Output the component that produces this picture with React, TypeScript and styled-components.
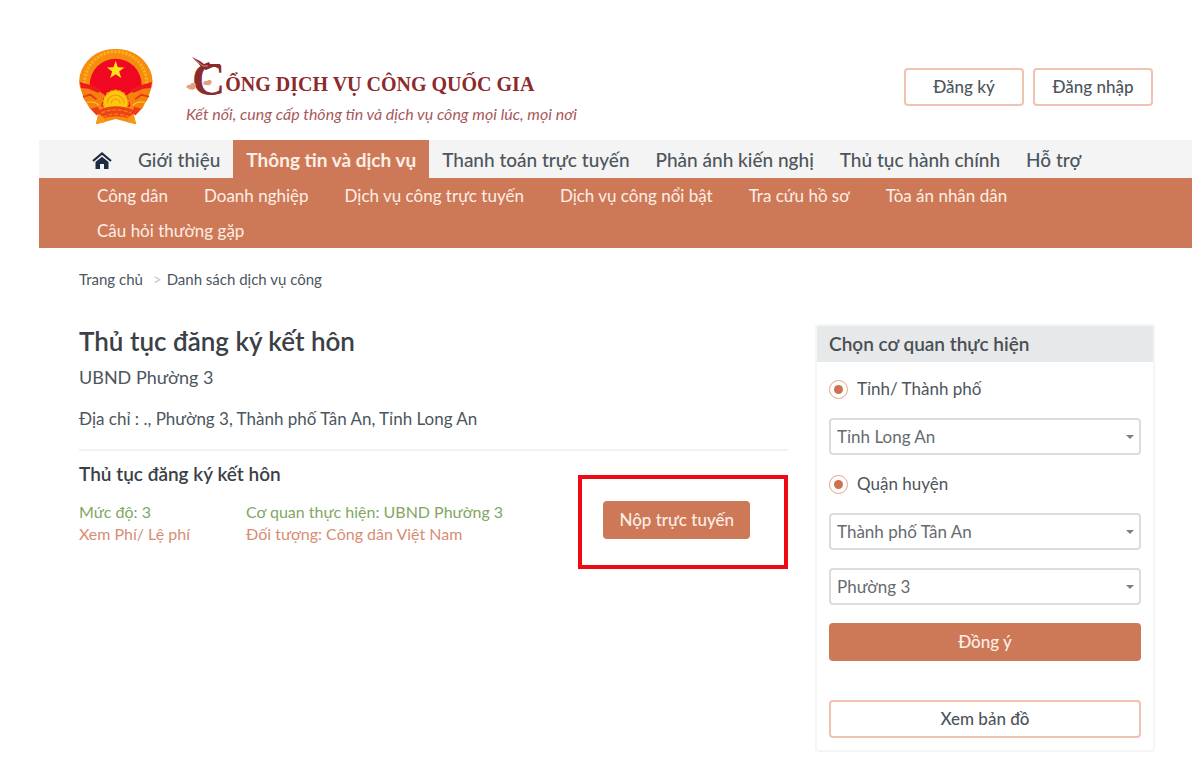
import React from 'react';
import styled, { createGlobalStyle, css } from 'styled-components';

const color = {
  brand: '#cd7957',
  brandSoft: '#efc2b1',
  maroon: '#8c2a2c',
  text: '#4d555d',
  dark: '#3b4046',
  green: '#83a663',
  line: '#f2f2f2',
};

const GlobalStyle = createGlobalStyle`
  *, *::before, *::after { box-sizing: border-box; }
  body {
    margin: 0;
    background: #fff;
    color: ${color.text};
    font-family: Lato, "Noto Sans", sans-serif;
    font-size: 16px;
    line-height: 22px;
  }
  a { color: inherit; text-decoration: none; }
  h1, h2, h3, p, ul, ol { margin: 0; padding: 0; }
  ul, ol { list-style: none; }
  button, select, input { font: inherit; color: inherit; margin: 0; }
`;

const Page = styled.div`
  padding-left: 39px;
`;

const Header = styled.header`
  display: flex;
  align-items: center;
  min-height: 140px;
  padding: 49px 39px 15px 40px;
`;

const Brand = styled.a`
  display: flex;
  align-items: center;
  gap: 33px;
  flex: 1;
`;

const BrandText = styled.span`
  display: flex;
  flex-direction: column;
  color: ${color.maroon};
`;

const BrandName = styled.span`
  display: flex;
  align-items: flex-end;
  height: 46px;
  font-family: "Liberation Serif", serif;
  font-weight: 700;
  font-size: 20px;
  line-height: 26px;
  white-space: nowrap;
`;

const Initial = styled.span`
  position: relative;
  padding-left: 6px;
  font-size: 46px;
  line-height: 34px;
`;

const Ornament = styled.svg`
  position: absolute;
  left: 0;
  top: -7px;
`;

const Slogan = styled.span`
  padding-top: 7px;
  color: #a8595b;
  font-size: 16px;
  line-height: 20px;
  font-style: italic;
  white-space: nowrap;
`;

const Actions = styled.div`
  display: flex;
  gap: 9px;
`;

const Button = styled.button<{ $solid?: boolean; $wide?: boolean }>`
  height: 38px;
  width: ${p => (p.$wide ? '100%' : 'auto')};
  min-width: 120px;
  padding: 0 14px;
  border: 2px solid ${color.brandSoft};
  border-radius: 4px;
  background: #fff;
  color: ${color.text};
  font-size: 17px;
  font-weight: 500;
  cursor: pointer;
  ${p => p.$solid && css`
    border-color: ${color.brand};
    background: ${color.brand};
    color: #fdeee6;
  `}
`;

const MainNav = styled.nav`
  background: #f4f4f4;
  padding-left: 40px;
`;

const MainList = styled.ul`
  display: flex;
`;

const MainLink = styled.a<{ $active?: boolean }>`
  display: flex;
  align-items: center;
  height: 38px;
  padding: 2px 13px 0;
  font-size: 19px;
  font-weight: ${p => (p.$active ? 700 : 500)};
  white-space: nowrap;
  background: ${p => (p.$active ? color.brand : 'transparent')};
  color: ${p => (p.$active ? '#fdeee6' : color.text)};
`;

const SubNav = styled.nav`
  background: ${color.brand};
  padding: 0 39px 0 40px;
`;

const SubList = styled.ul`
  display: flex;
  flex-wrap: wrap;
`;

const SubLink = styled.a`
  display: block;
  padding: 0 18px;
  color: #fdeee6;
  font-size: 17px;
  line-height: 35px;
  white-space: nowrap;
`;

const Breadcrumb = styled.nav`
  padding: 20px 40px 0;
  font-size: 15px;
  line-height: 22px;
`;

const Crumbs = styled.ol`
  display: flex;
  gap: 10px;
  li + li::before {
    content: '>';
    margin-right: 5px;
    color: #c4c7ca;
  }
`;

const Content = styled.div`
  display: grid;
  grid-template-columns: minmax(0, 1fr) 340px;
  gap: 27px;
  align-items: start;
  padding: 34px 37px 31px 40px;
`;

const Title = styled.h1`
  color: ${color.dark};
  font-size: 26px;
  font-weight: 600;
  line-height: 34px;
`;

const Office = styled.p`
  padding-top: 7px;
  font-size: 18px;
  line-height: 24px;
`;

const Address = styled.p`
  padding: 19px 0;
  font-size: 17px;
`;

const Procedure = styled.section`
  display: flex;
  justify-content: space-between;
  border-top: 2px solid ${color.line};
`;

const Info = styled.div`
  padding-top: 12px;
`;

const Subtitle = styled.h2`
  padding-bottom: 16px;
  color: ${color.dark};
  font-size: 19px;
  font-weight: 600;
  line-height: 22px;
`;

const Facts = styled.div`
  display: grid;
  grid-template-columns: 167px auto;
`;

const Fact = styled.span`
  color: ${color.green};
`;

const FactLink = styled.a`
  color: #d88d73;
`;

const Highlight = styled.div`
  align-self: flex-start;
  margin-top: 24px;
  padding: 22px 34px 26px 21px;
  border: 4px solid #ee0a14;
`;

const Panel = styled.aside`
  border: 2px solid #f5f5f5;
  border-radius: 4px;
`;

const PanelTitle = styled.h2`
  padding: 0 12px;
  background: #e6e8ea;
  color: #4a4f54;
  font-size: 19px;
  font-weight: 600;
  line-height: 36px;
`;

const PanelForm = styled.form`
  display: flex;
  flex-direction: column;
  gap: 18px;
  padding: 16px 12px 12px;
`;

const RadioLabel = styled.label`
  display: flex;
  align-items: center;
  gap: 9px;
  height: 22px;
  font-size: 17px;
`;

const Radio = styled.input`
  appearance: none;
  display: grid;
  place-items: center;
  width: 19px;
  height: 19px;
  border: 1px solid #e5a58d;
  border-radius: 50%;
  &:checked::before {
    content: '';
    width: 9px;
    height: 9px;
    border-radius: 50%;
    background: #cf7250;
  }
`;

const SelectBox = styled.div`
  position: relative;
  &::after {
    content: '';
    position: absolute;
    right: 7px;
    top: 17px;
    border: 4px solid transparent;
    border-top-color: #808080;
    border-bottom-width: 0;
    pointer-events: none;
  }
`;

const Select = styled.select`
  appearance: none;
  display: block;
  width: 100%;
  height: 37px;
  padding: 0 24px 0 6px;
  border: 2px solid #dcdcdc;
  border-radius: 4px;
  background: #fff;
  color: #666a6e;
  font-size: 17px;
`;

const MapRow = styled.div`
  padding-top: 21px;
`;

const Emblem = () => (
  <svg width="74" height="76" viewBox="0 0 220 226" aria-hidden="true">
    <path d="M50 224 58 190 32 178 18 152 3 114Q-4 88 8 62 38 0 109 0T211 62Q223 88 216 114L201 152 188 178 161 190 170 224 146 218 109 208 74 218Z" fill="#f78d10" />
    <circle cx="109" cy="100" r="92" fill="none" stroke="#fbb01c" strokeWidth="9" strokeDasharray="7 4" />
    <circle cx="109" cy="106" r="77" fill="#f00822" />
    <path d="M4 112 44 116 76 136 62 182 34 176 14 148ZM215 112 175 116 143 136 157 182 185 176 205 148Z" fill="#f5820f" />
    <path d="M2 98 44 110 70 124 56 130 28 118 6 116ZM217 98 175 110 149 124 163 130 191 118 213 116Z" fill="#ee1a1e" />
    <path d="M12 142 34 136 52 150M208 142 185 136 167 150" fill="none" stroke="#e8301a" strokeWidth="5" />
    <path d="M22 160q20-8 38 8M197 160q-20-8-38 8" fill="none" stroke="#fbc01e" strokeWidth="4" />
    <path d="M109 36l6.500 18.500 19.500.5-15.500 12 6 19.500L109 75 92.500 86.500l6-19.500L83 55l19.500-.5z" fill="#ffe11b" />
    <circle cx="109" cy="160" r="37" fill="#fcc80c" stroke="#f9a010" strokeWidth="5" strokeDasharray="8 5" />
    <path d="M84 162a25 25 0 0 1 50 0M96 162a13 13 0 0 1 26 0" fill="none" stroke="#f69a11" strokeWidth="4" />
    <path d="M56 182Q109 158 164 182L158 210Q109 190 62 210Z" fill="#ee4318" />
    <path d="M66 190Q109 172 154 190M72 202Q109 186 148 202" fill="none" stroke="#f67c15" strokeWidth="4" strokeDasharray="12 5" />
    <path d="M50 224 58 192 74 204 76 218ZM170 224 162 192 146 204 144 218Z" fill="#f9971a" />
    <path d="M34 178 56 172 62 190 52 198ZM186 178 164 172 158 190 168 198Z" fill="#ee3b1a" />
  </svg>
);

const HomeIcon = () => (
  <svg width="20" height="17" viewBox="0 0 20 17" role="img" aria-label="Trang chủ">
    <path d="M1 9 10 1.500 19 9" fill="none" stroke="#1d2c40" strokeWidth="2.200" />
    <path d="M3.500 10 10 4.800 16.500 10V17H12V12H8V17H3.500Z" fill="#1d2c40" />
  </svg>
);

const mainItems = ['Giới thiệu', 'Thông tin và dịch vụ', 'Thanh toán trực tuyến', 'Phản ánh kiến nghị', 'Thủ tục hành chính', 'Hỗ trợ'];
const subItems = ['Công dân', 'Doanh nghiệp', 'Dịch vụ công trực tuyến', 'Dịch vụ công nổi bật', 'Tra cứu hồ sơ', 'Tòa án nhân dân', 'Câu hỏi thường gặp'];

const Dropdown = ({ label, value }: { label: string; value: string }) => (
  <SelectBox>
    <Select aria-label={label} defaultValue={value}>
      <option>{value}</option>
    </Select>
  </SelectBox>
);

export default function App() {
  return (
    <>
      <GlobalStyle />
      <Page>
        <Header>
          <Brand href="#">
            <Emblem />
            <BrandText>
              <BrandName>
                <Initial>
                  C
                  <Ornament width="38" height="42" viewBox="0 0 38 42" aria-hidden="true">
                    <path d="M6 1 14 5 18 8 23 6 24 8 34 8 35 11 27 11 20 14 16 12 12 7Z" fill={color.maroon} />
                    <path d="M8 3 17 10 22 10" fill="none" stroke="#c98b84" strokeWidth="1" />
                    <path d="M0 31q2-3 4-2 2-4 6-1l-1 5q-5 2-9-2ZM17 28q1-4 4-3 3-3 5 1l-2 3q-4 1-7-1Z" fill="#e5a07f" />
                  </Ornament>
                </Initial>
                ỔNG DỊCH VỤ CÔNG QUỐC GIA
              </BrandName>
              <Slogan>Kết nối, cung cấp thông tin và dịch vụ công mọi lúc, mọi nơi</Slogan>
            </BrandText>
          </Brand>
          <Actions>
            <Button type="button">Đăng ký</Button>
            <Button type="button">Đăng nhập</Button>
          </Actions>
        </Header>

        <MainNav>
          <MainList>
            <li><MainLink href="#"><HomeIcon /></MainLink></li>
            {mainItems.map((item, i) => (
              <li key={item}><MainLink href="#" $active={i === 1}>{item}</MainLink></li>
            ))}
          </MainList>
        </MainNav>
        <SubNav>
          <SubList>
            {subItems.map(item => (
              <li key={item}><SubLink href="#">{item}</SubLink></li>
            ))}
          </SubList>
        </SubNav>

        <Breadcrumb>
          <Crumbs>
            <li><a href="#">Trang chủ</a></li>
            <li><a href="#">Danh sách dịch vụ công</a></li>
          </Crumbs>
        </Breadcrumb>

        <Content>
          <main>
            <Title>Thủ tục đăng ký kết hôn</Title>
            <Office>UBND Phường 3</Office>
            <Address>Địa chỉ : ., Phường 3, Thành phố Tân An, Tỉnh Long An</Address>
            <Procedure>
              <Info>
                <Subtitle>Thủ tục đăng ký kết hôn</Subtitle>
                <Facts>
                  <Fact>Mức độ: 3</Fact>
                  <Fact>Cơ quan thực hiện: UBND Phường 3</Fact>
                  <FactLink href="#">Xem Phí/ Lệ phí</FactLink>
                  <FactLink as="span">Đối tượng: Công dân Việt Nam</FactLink>
                </Facts>
              </Info>
              <Highlight>
                <Button type="button" $solid>Nộp trực tuyến</Button>
              </Highlight>
            </Procedure>
          </main>

          <Panel>
            <PanelTitle>Chọn cơ quan thực hiện</PanelTitle>
            <PanelForm>
              <RadioLabel><Radio type="radio" name="province" defaultChecked />Tỉnh/ Thành phố</RadioLabel>
              <Dropdown label="Tỉnh/ Thành phố" value="Tỉnh Long An" />
              <RadioLabel><Radio type="radio" name="district" defaultChecked />Quận huyện</RadioLabel>
              <Dropdown label="Quận huyện" value="Thành phố Tân An" />
              <Dropdown label="Phường xã" value="Phường 3" />
              <Button type="button" $solid $wide>Đồng ý</Button>
              <MapRow><Button type="button" $wide>Xem bản đồ</Button></MapRow>
            </PanelForm>
          </Panel>
        </Content>
      </Page>
    </>
  );
}
